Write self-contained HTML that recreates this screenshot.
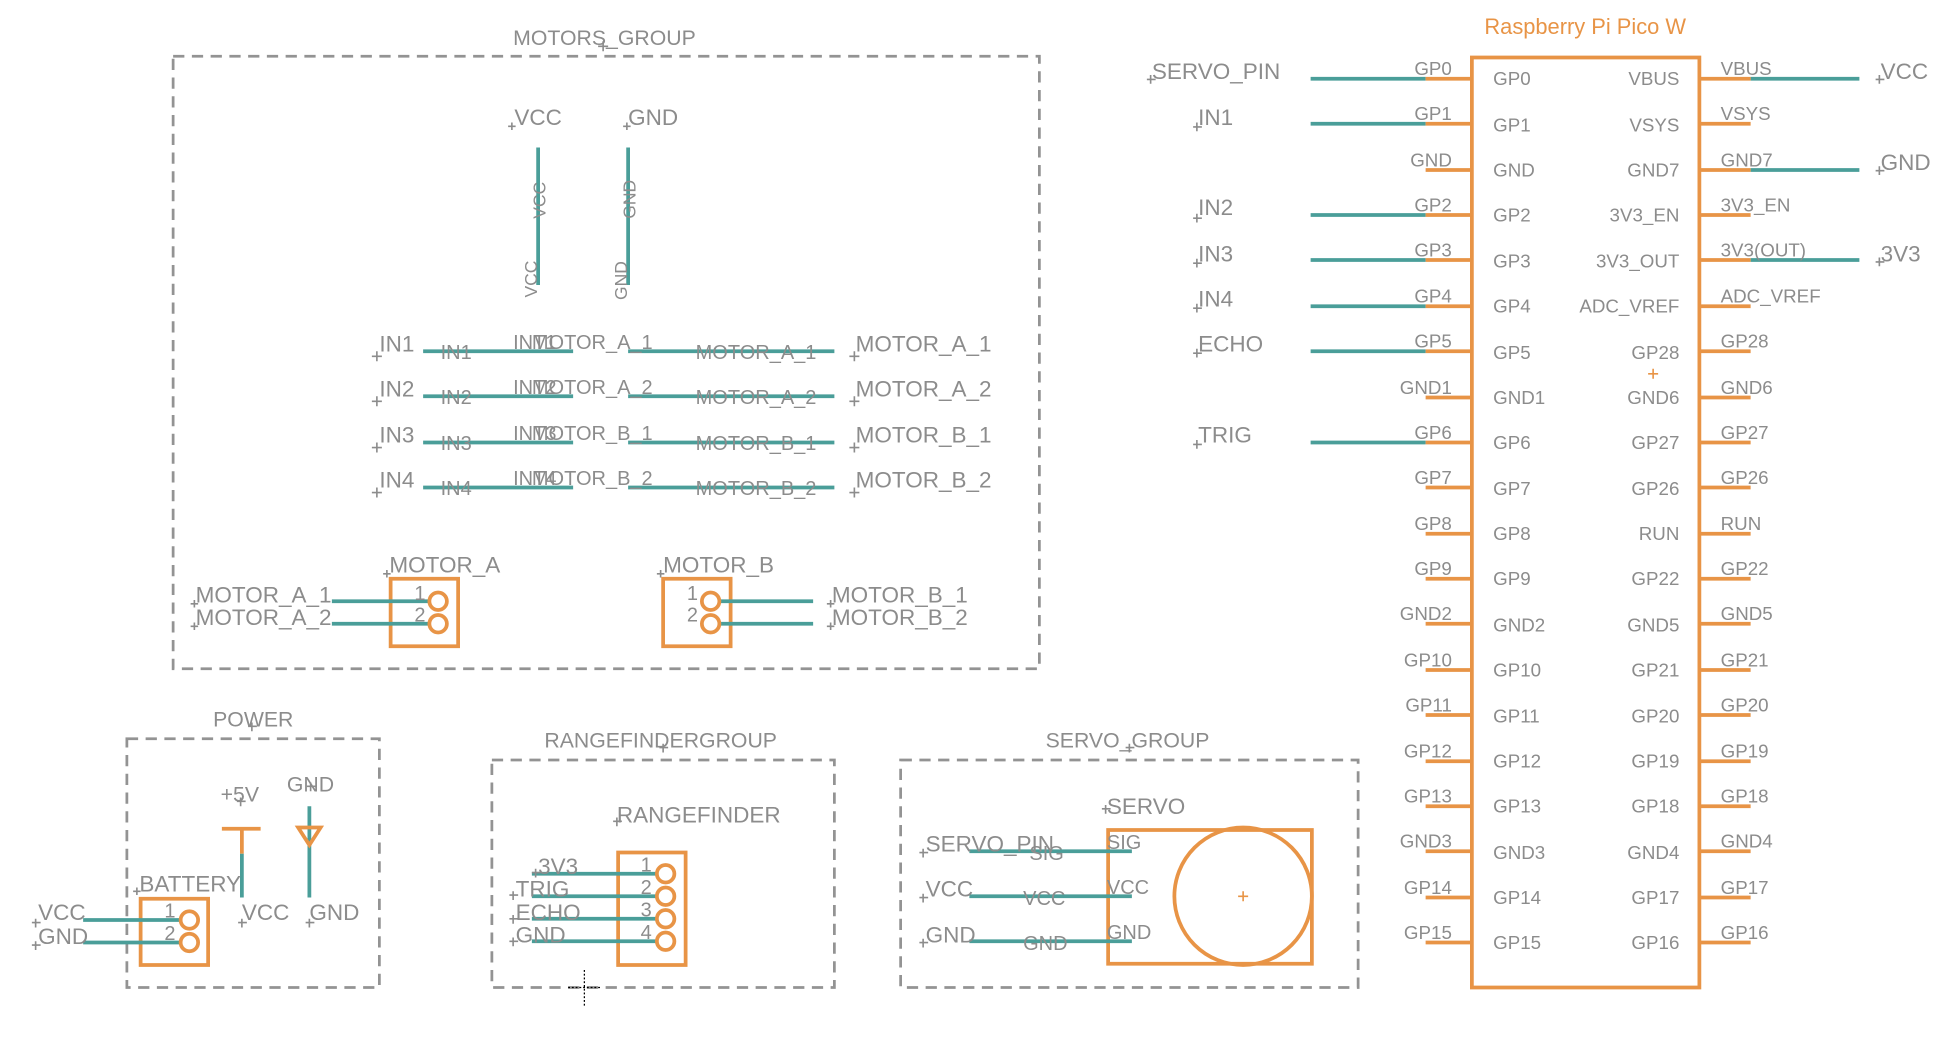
<!DOCTYPE html>
<html><head><meta charset="utf-8"><style>
html,body{margin:0;padding:0;background:#fff;width:1960px;height:1040px;overflow:hidden}
svg{display:block}
text{font-family:"Liberation Sans",sans-serif;fill:#8c8c8c}
.t{stroke:#4a9e99;stroke-width:3;fill:none}
.o{stroke:#e89446;stroke-width:3;fill:none}
.d{stroke:#939393;stroke-width:2.2;fill:none;stroke-dasharray:9 6}
.p{stroke:#8c8c8c;stroke-width:1.3}
.L{font-size:18px}.M{font-size:16px}.S{font-size:15px}.R{font-size:14px}.G{font-size:17px}
</style></head><body>
<svg width="1960" height="1040" viewBox="0 0 1567 832" xmlns="http://www.w3.org/2000/svg">
<rect class="d" x="138" y="45" width="693" height="490"/>
<text class="G" x="410" y="36">MOTORS_GROUP</text>
<path class="p" d="M482 33v8M478 37h8"/>
<text class="L" x="411" y="100">VCC</text><path class="p" d="M409 98v6M406 101h6"/>
<text class="L" x="502" y="100">GND</text><path class="p" d="M501 98v6M498 101h6"/>
<line class="t" x1="430" y1="118" x2="430" y2="228"/>
<line class="t" x1="502" y1="118" x2="502" y2="228"/>
<text class="R" transform="translate(436,175) rotate(-90)">VCC</text>
<text class="R" transform="translate(429,238) rotate(-90)">VCC</text>
<text class="R" transform="translate(508,175) rotate(-90)">GND</text>
<text class="R" transform="translate(501,240) rotate(-90)">GND</text>
<g>
<text class="L" x="303" y="281">IN1</text><text class="L" x="303" y="317">IN2</text><text class="L" x="303" y="354">IN3</text><text class="L" x="303" y="390">IN4</text>
<path class="p" d="M301 281v8M297 285h8M301 317v8M297 321h8M301 354v8M297 358h8M301 390v8M297 394h8M683 281v8M679 285h8M683 317v8M679 321h8M683 354v8M679 358h8M683 390v8M679 394h8"/>
<path class="t" d="M338 281H458M338 317H458M338 354H458M338 390H458M502 281H667M502 317H667M502 354H667M502 390H667"/>
<text class="M" x="352" y="287">IN1</text><text class="M" x="352" y="323">IN2</text><text class="M" x="352" y="360">IN3</text><text class="M" x="352" y="396">IN4</text>
<text class="M" x="410" y="279">INT1</text><text class="M" x="425" y="279">MOTOR_A_1</text>
<text class="M" x="410" y="315">INT2</text><text class="M" x="425" y="315">MOTOR_A_2</text>
<text class="M" x="410" y="352">INT3</text><text class="M" x="425" y="352">MOTOR_B_1</text>
<text class="M" x="410" y="388">INT4</text><text class="M" x="425" y="388">MOTOR_B_2</text>
<text class="M" x="556" y="287">MOTOR_A_1</text><text class="M" x="556" y="323">MOTOR_A_2</text><text class="M" x="556" y="360">MOTOR_B_1</text><text class="M" x="556" y="396">MOTOR_B_2</text>
<text class="L" x="684" y="281">MOTOR_A_1</text><text class="L" x="684" y="317">MOTOR_A_2</text><text class="L" x="684" y="354">MOTOR_B_1</text><text class="L" x="684" y="390">MOTOR_B_2</text>
</g>
<text class="L" x="311" y="458">MOTOR_A</text><path class="p" d="M309 456v6M306 459h6"/>
<rect class="o" x="312" y="463" width="54" height="54"/>
<path class="t" d="M265 481H343M265 499H343"/>
<circle class="o" cx="350" cy="481" r="7"/><circle class="o" cx="350" cy="499" r="7"/>
<text class="M" x="331" y="480">1</text><text class="M" x="331" y="497">2</text>
<text class="L" x="156" y="482">MOTOR_A_1</text><text class="L" x="156" y="500">MOTOR_A_2</text>
<path class="p" d="M155 480v6M152 483h6M155 498v6M152 501h6"/>
<text class="L" x="530" y="458">MOTOR_B</text><path class="p" d="M528 456v6M525 459h6"/>
<rect class="o" x="530" y="463" width="54" height="54"/>
<path class="t" d="M575 481H650M575 499H650"/>
<circle class="o" cx="568" cy="481" r="7"/><circle class="o" cx="568" cy="499" r="7"/>
<text class="M" x="549" y="480">1</text><text class="M" x="549" y="497">2</text>
<text class="L" x="665" y="482">MOTOR_B_1</text><text class="L" x="665" y="500">MOTOR_B_2</text>
<path class="p" d="M664 480v6M661 483h6M664 498v6M661 501h6"/>

<text x="1187" y="27" style="font-size:17.5px;fill:#e89446">Raspberry Pi Pico W</text>
<rect class="o" x="1177" y="46" width="182" height="744"/>
<path d="M1318 299h8M1322 295v8" stroke="#e89446" stroke-width="1.3"/>
<g>
<path class="t" d="M1048 63H1140M1048 99H1140M1048 172H1140M1048 208H1140M1048 245H1140M1048 281H1140M1048 354H1140M1400 63H1487M1400 136H1487M1400 208H1487"/>
<path class="o" d="M1140 63H1177M1140 99H1177M1140 136H1177M1140 172H1177M1140 208H1177M1140 245H1177M1140 281H1177M1140 318H1177M1140 354H1177M1140 390H1177M1140 427H1177M1140 463H1177M1140 499H1177M1140 536H1177M1140 572H1177M1140 609H1177M1140 645H1177M1140 681H1177M1140 718H1177M1140 754H1177"/>
<path class="o" d="M1359 63H1400M1359 99H1400M1359 136H1400M1359 172H1400M1359 208H1400M1359 245H1400M1359 281H1400M1359 318H1400M1359 354H1400M1359 390H1400M1359 427H1400M1359 463H1400M1359 499H1400M1359 536H1400M1359 572H1400M1359 609H1400M1359 645H1400M1359 681H1400M1359 718H1400M1359 754H1400"/>
</g>
<g class="S" text-anchor="start">
<text x="1194" y="68">GP0</text><text x="1194" y="105">GP1</text><text x="1194" y="141">GND</text><text x="1194" y="177">GP2</text><text x="1194" y="214">GP3</text><text x="1194" y="250">GP4</text><text x="1194" y="287">GP5</text><text x="1194" y="323">GND1</text><text x="1194" y="359">GP6</text><text x="1194" y="396">GP7</text><text x="1194" y="432">GP8</text><text x="1194" y="468">GP9</text><text x="1194" y="505">GND2</text><text x="1194" y="541">GP10</text><text x="1194" y="578">GP11</text><text x="1194" y="614">GP12</text><text x="1194" y="650">GP13</text><text x="1194" y="687">GND3</text><text x="1194" y="723">GP14</text><text x="1194" y="759">GP15</text>
</g>
<g class="S" text-anchor="end">
<text x="1343" y="68">VBUS</text><text x="1343" y="105">VSYS</text><text x="1343" y="141">GND7</text><text x="1343" y="177">3V3_EN</text><text x="1343" y="214">3V3_OUT</text><text x="1343" y="250">ADC_VREF</text><text x="1343" y="287">GP28</text><text x="1343" y="323">GND6</text><text x="1343" y="359">GP27</text><text x="1343" y="396">GP26</text><text x="1343" y="432">RUN</text><text x="1343" y="468">GP22</text><text x="1343" y="505">GND5</text><text x="1343" y="541">GP21</text><text x="1343" y="578">GP20</text><text x="1343" y="614">GP19</text><text x="1343" y="650">GP18</text><text x="1343" y="687">GND4</text><text x="1343" y="723">GP17</text><text x="1343" y="759">GP16</text>
<text x="1161" y="60">GP0</text><text x="1161" y="96">GP1</text><text x="1161" y="133">GND</text><text x="1161" y="169">GP2</text><text x="1161" y="205">GP3</text><text x="1161" y="242">GP4</text><text x="1161" y="278">GP5</text><text x="1161" y="315">GND1</text><text x="1161" y="351">GP6</text><text x="1161" y="387">GP7</text><text x="1161" y="424">GP8</text><text x="1161" y="460">GP9</text><text x="1161" y="496">GND2</text><text x="1161" y="533">GP10</text><text x="1161" y="569">GP11</text><text x="1161" y="606">GP12</text><text x="1161" y="642">GP13</text><text x="1161" y="678">GND3</text><text x="1161" y="715">GP14</text><text x="1161" y="751">GP15</text>
</g>
<g class="S">
<text x="1376" y="60">VBUS</text><text x="1376" y="96">VSYS</text><text x="1376" y="133">GND7</text><text x="1376" y="169">3V3_EN</text><text x="1376" y="205">3V3(OUT)</text><text x="1376" y="242">ADC_VREF</text><text x="1376" y="278">GP28</text><text x="1376" y="315">GND6</text><text x="1376" y="351">GP27</text><text x="1376" y="387">GP26</text><text x="1376" y="424">RUN</text><text x="1376" y="460">GP22</text><text x="1376" y="496">GND5</text><text x="1376" y="533">GP21</text><text x="1376" y="569">GP20</text><text x="1376" y="606">GP19</text><text x="1376" y="642">GP18</text><text x="1376" y="678">GND4</text><text x="1376" y="715">GP17</text><text x="1376" y="751">GP16</text>
</g>
<g class="L">
<text x="921" y="63">SERVO_PIN</text><text x="958" y="100">IN1</text><text x="958" y="172">IN2</text><text x="958" y="209">IN3</text><text x="958" y="245">IN4</text><text x="958" y="281">ECHO</text><text x="958" y="354">TRIG</text>
<text x="1504" y="63">VCC</text><text x="1504" y="136">GND</text><text x="1504" y="209">3V3</text>
</g>
<path class="p" d="M920 60v7M917 63.5h7M957 98v7M954 101.5h7M957 171v7M954 174.5h7M957 207v7M954 210.5h7M957 243v7M954 246.5h7M957 279v7M954 282.5h7M957 352v7M954 355.5h7M1503 60v7M1500 63.5h7M1503 133v7M1500 136.5h7M1503 206v7M1500 209.5h7"/>

<rect class="d" x="101" y="591" width="202" height="199"/>
<text class="G" x="170" y="581">POWER</text><path class="p" d="M201 578v7M198 581h7"/>
<text class="G" x="176" y="641">+5V</text><path class="p" d="M192 638v7M189 641h7"/>
<text class="G" x="229" y="633">GND</text><path class="p" d="M248 626v7M245 629h7"/>
<path class="o" d="M177 663H208M193 663V683"/>
<path class="t" d="M193 683V718M247 645V718"/>
<path class="o" d="M238 662H256L247 676Z"/>
<text class="L" x="111" y="713">BATTERY</text><path class="p" d="M109 710v6M106 713h6"/>
<rect class="o" x="112" y="719" width="54" height="53"/>
<path class="t" d="M66 736H143M66 754H143"/>
<circle class="o" cx="151" cy="736" r="7"/><circle class="o" cx="151" cy="754" r="7"/>
<text class="M" x="131" y="734">1</text><text class="M" x="131" y="752">2</text>
<text class="L" x="30" y="736">VCC</text><text class="L" x="30" y="755">GND</text>
<text class="L" x="193" y="736">VCC</text><text class="L" x="247" y="736">GND</text>
<path class="p" d="M28 735v7M25 738h7M28 753v7M25 756h7M193 735v7M190 738h7M247 735v7M244 738h7"/>

<rect class="d" x="393" y="608" width="274" height="182"/>
<text class="G" x="435" y="598">RANGEFINDERGROUP</text><path class="p" d="M530 595v7M527 598h7"/>
<text class="L" x="493" y="658">RANGEFINDER</text><path class="p" d="M493 654v7M490 657h7"/>
<rect class="o" x="494" y="682" width="54" height="90"/>
<path class="t" d="M425 699H524M425 717H524M425 735H524M425 753H524"/>
<circle class="o" cx="532" cy="699" r="7"/><circle class="o" cx="532" cy="717" r="7"/><circle class="o" cx="532" cy="735" r="7"/><circle class="o" cx="532" cy="753" r="7"/>
<text class="M" x="512" y="697">1</text><text class="M" x="512" y="715">2</text><text class="M" x="512" y="733">3</text><text class="M" x="512" y="751">4</text>
<text class="L" x="430" y="699">3V3</text><text class="L" x="412" y="717">TRIG</text><text class="L" x="412" y="736">ECHO</text><text class="L" x="412" y="754">GND</text>
<path class="p" d="M428 695v7M425 698h7M410 713v7M407 716h7M410 732v7M407 735h7M410 750v7M407 753h7"/>
<path d="M467 776V805M454 790H480" stroke="#000" stroke-width="1" stroke-dasharray="1.5 1.5"/>

<rect class="d" x="720" y="608" width="366" height="182"/>
<text class="G" x="836" y="598">SERVO_GROUP</text><path class="p" d="M903 595v7M900 598h7"/>
<text class="L" x="885" y="651">SERVO</text><path class="p" d="M884 644v7M881 647h7"/>
<rect class="o" x="886" y="664" width="163" height="107"/>
<circle class="o" cx="994" cy="717" r="55"/>
<path d="M990 717h8M994 713v8" stroke="#e89446" stroke-width="1.3"/>
<path class="t" d="M775 681H905M775 717H905M775 753H905"/>
<text class="L" x="740" y="681">SERVO_PIN</text><text class="L" x="740" y="717">VCC</text><text class="L" x="740" y="754">GND</text>
<path class="p" d="M738 679v7M735 682h7M738 715v7M735 718h7M738 751v7M735 754h7"/>
<text class="M" x="823" y="688">SIG</text><text class="M" x="818" y="724">VCC</text><text class="M" x="818" y="760">GND</text>
<text class="M" x="885" y="679">SIG</text><text class="M" x="885" y="715">VCC</text><text class="M" x="885" y="751">GND</text>
</svg>
</body></html>
